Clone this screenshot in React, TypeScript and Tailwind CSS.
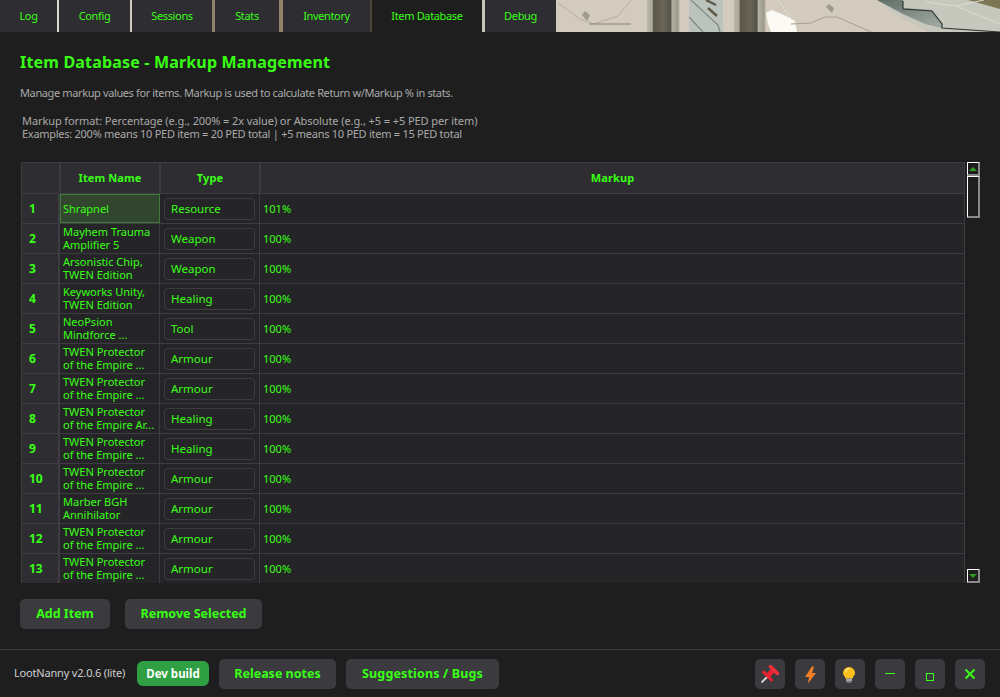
import { ReactNode } from "react";

const tabs = [
  { label: "Log", w: "w-[59px]", gap: "border-r-2 border-[#d8d6cc]" },
  { label: "Config", w: "w-[73px]", gap: "border-r-2 border-[#cfcabb]" },
  { label: "Sessions", w: "w-[83px]", gap: "border-r-[3px] border-[#8f8468]" },
  { label: "Stats", w: "w-[68px]", gap: "border-r-4 border-[#8f8468]" },
  { label: "Inventory", w: "w-[89px]", gap: "border-r-2 border-[#4a4536]" },
  { label: "Item Database", w: "w-[113px]", gap: "border-r-[3px] border-[#c8c6bc]", active: true },
  { label: "Debug", w: "w-[71px]", gap: "" },
];

const rows: [string, string, string][] = [
  ["Shrapnel", "Resource", "101%"],
  ["Mayhem Trauma\nAmplifier 5", "Weapon", "100%"],
  ["Arsonistic Chip,\nTWEN Edition", "Weapon", "100%"],
  ["Keyworks Unity,\nTWEN Edition", "Healing", "100%"],
  ["NeoPsion\nMindforce ...", "Tool", "100%"],
  ["TWEN Protector\nof the Empire ...", "Armour", "100%"],
  ["TWEN Protector\nof the Empire ...", "Armour", "100%"],
  ["TWEN Protector\nof the Empire Ar...", "Healing", "100%"],
  ["TWEN Protector\nof the Empire ...", "Healing", "100%"],
  ["TWEN Protector\nof the Empire ...", "Armour", "100%"],
  ["Marber BGH\nAnnihilator", "Armour", "100%"],
  ["TWEN Protector\nof the Empire ...", "Armour", "100%"],
  ["TWEN Protector\nof the Empire ...", "Armour", "100%"],
];

function HeaderPhoto() {
  return (
    <svg viewBox="0 0 444 32" preserveAspectRatio="none" className="h-8 flex-1 block">
      <defs>
        <linearGradient id="pipe" x1="0" x2="1" y1="0" y2="0">
          <stop offset="0" stopColor="#b9b7a6" />
          <stop offset="0.16" stopColor="#a8a695" />
          <stop offset="0.2" stopColor="#5c5749" />
          <stop offset="0.5" stopColor="#6a6558" />
          <stop offset="0.72" stopColor="#56524a" />
          <stop offset="0.76" stopColor="#b3b1a0" />
          <stop offset="0.94" stopColor="#9b9989" />
          <stop offset="1" stopColor="#d3ccbd" />
        </linearGradient>
        <linearGradient id="wedge" x1="0" x2="1" y1="0" y2="1">
          <stop offset="0" stopColor="#5f6e68" />
          <stop offset="1" stopColor="#a3aca4" />
        </linearGradient>
      </defs>
      <rect width="444" height="32" fill="#d3ccbe" />
      <path d="M2 3l22 16 14 5M75 0L62 16 38 24" stroke="#b7ae9c" strokeWidth="1" fill="none" />
      <path d="M26 15l5 6 3-6-5-4z" fill="#a09a8a" />
      <path d="M33 24h42" stroke="#8a8371" strokeWidth="1" />
      <rect x="91" width="33" height="32" fill="url(#pipe)" />
      <rect x="133" width="34" height="32" fill="#bcc2bc" />
      <path d="M135 0l27 25 2 7M133 17l14 15" stroke="#7f8781" strokeWidth="1.200" fill="none" />
      <path d="M150 0l10 5M152 8l9 8" stroke="#5f5a4c" strokeWidth="2.500" fill="none" />
      <rect x="178" width="32" height="32" fill="url(#pipe)" />
      <path d="M210 13l6-3 14 6 9 5 2 11h-26l-3-8z" fill="#fbfaf4" />
      <path d="M235 24l20-1 14-6 12 0 34 15" stroke="#a89f8b" strokeWidth="1" fill="none" />
      <path d="M222 0l14 20" stroke="#e8e4da" strokeWidth="1" strokeDasharray="2 2" fill="none" />
      <path d="M270 7l6 6 2-5-5-4z" fill="#a09a8a" />
      <path d="M321 0h123v32h-72l-10-6-17-8z" fill="#c6c7bd" />
      <path d="M321 0h26v8l29 2 10 14v4l-17-4-22-10z" fill="url(#wedge)" />
      <path d="M347 1v8l29 2 10 13v4l58 4" stroke="#2f3733" strokeWidth="1.200" fill="none" />
      <path d="M412 0h32v9z" fill="#7c7752" />
      <path d="M370 2l30 4 28-6M400 6l44 18" stroke="#dddbd0" strokeWidth="1" fill="none" />
    </svg>
  );
}

function PinIcon() {
  return (
    <svg width="18" height="18" viewBox="0 0 18 18">
      <path d="M0.500 17.500L6 12" stroke="#dcdcdc" strokeWidth="1.800" />
      <path d="M6 11.500L13 4.500" stroke="#e8232f" strokeWidth="5" />
      <path d="M2.500 7l8 8" stroke="#e8232f" strokeWidth="3" strokeLinecap="round" />
      <path d="M9.500 1.500l7 7" stroke="#f0303a" strokeWidth="3.500" strokeLinecap="round" />
    </svg>
  );
}

function BoltIcon() {
  return (
    <svg width="14" height="18" viewBox="0 0 14 18">
      <path d="M9 1.500L2 12h4l-1 6.500L13 8H9l2-6.500z" fill="#f47f24" />
    </svg>
  );
}

function BulbIcon() {
  return (
    <svg width="14" height="18" viewBox="0 0 14 18">
      <path d="M6 2a6 6 0 0 0-6 6c0 2.300 2 3.500 2.500 5.500h7C10 11.500 12 10.300 12 8a6 6 0 0 0-6-6z" fill="#fcc01e" />
      <path d="M3 7A3.200 3.200 0 0 1 6 3.700" stroke="#ffe27a" strokeWidth="1.500" fill="none" strokeLinecap="round" />
      <rect x="3" y="13.500" width="6" height="3" fill="#a8a8a8" />
      <rect x="4" y="16.500" width="4" height="1.500" fill="#7c7c7c" />
    </svg>
  );
}

function IconButton({ children }: { children: ReactNode }) {
  return (
    <div className="w-[30px] h-[30px] rounded-[5px] bg-[#3a3a3f] flex items-center justify-center">
      {children}
    </div>
  );
}

function TextButton({ children, className }: { children: ReactNode; className: string }) {
  return (
    <div className={`h-[30px] pt-px rounded-[5px] bg-[#3a3a3f] flex items-center justify-center text-[#39ff14] font-bold text-[12.500px] ${className}`}>
      {children}
    </div>
  );
}

function ScrollBar() {
  return (
    <div className="w-[13px] h-[421px] ml-[2px] flex flex-col justify-between">
      <div>
        <div className="w-[13px] h-[14px] bg-[#1e1e1e] border-l border-t border-white border-r-2 border-b-2 border-r-[#8a8a8a] border-b-[#8a8a8a] flex items-center justify-center">
          <div className="w-0 h-0 border-x-[4px] border-x-transparent border-b-[4px] border-b-[#2f9e22]" />
        </div>
        <div className="w-[13px] h-[42px] bg-[#1e1e1e] border-l border-t border-white border-r-2 border-b-2 border-r-[#8a8a8a] border-b-[#8a8a8a]" />
      </div>
      <div className="w-[13px] h-[14px] bg-[#1e1e1e] border-l border-t border-white border-r-2 border-b-2 border-r-[#8a8a8a] border-b-[#8a8a8a] flex items-center justify-center">
        <div className="w-0 h-0 border-x-[4px] border-x-transparent border-t-[4px] border-t-[#2f9e22]" />
      </div>
    </div>
  );
}

export default function App() {
  return (
    <div className="w-[1000px] h-[697px] bg-[#1e1e1e] flex flex-col overflow-hidden font-['Noto_Sans',sans-serif] text-[#39ff14]">
      <div className="h-8 flex">
        {tabs.map((t) => (
          <div
            key={t.label}
            className={`${t.w} ${t.gap} h-8 flex items-center justify-center text-[11px] tracking-[-0.35px] ${t.active ? "bg-[#1e1e1e]" : "bg-[#2d2d32]"}`}
          >
            {t.label}
          </div>
        ))}
        <HeaderPhoto />
      </div>

      <div className="flex-1 flex flex-col px-5 min-h-0">
        <h1 className="mt-[20px] h-5 leading-5 font-bold text-[16px] tracking-[0.18px]">Item Database - Markup Management</h1>
        <p className="mt-[13px] h-4 leading-4 text-[11px] tracking-[-0.38px] text-[#a9a9a9]">
          Manage markup values for items. Markup is used to calculate Return w/Markup % in stats.
        </p>
        <div className="mt-[13px] ml-[2px] text-[11px] leading-[13px] text-[#a9a9a9]">
          <p className="tracking-[-0.09px]">Markup format: Percentage (e.g., 200% = 2x value) or Absolute (e.g., +5 = +5 PED per item)</p>
          <p className="tracking-[-0.27px]">Examples: 200% means 10 PED item = 20 PED total | +5 means 10 PED item = 15 PED total</p>
        </div>

        <div className="mt-[22px] ml-px flex h-[421px]">
          <div className="w-[944px] h-[421px] overflow-hidden border-l border-t border-[#3c3c42]">
            <div className="flex h-[31px] bg-[#2d2d32] font-bold text-[11px] tracking-[0.1px] border-b border-[#3c3c42]">
              <div className="w-[39px] border-r-2 border-[#3c3c42]" />
              <div className="w-[100px] border-r-2 border-[#3c3c42] flex items-center justify-center">Item Name</div>
              <div className="w-[100px] border-r-2 border-[#3c3c42] flex items-center justify-center">Type</div>
              <div className="flex-1 border-r border-[#3c3c42] flex items-center justify-center">Markup</div>
            </div>
            {rows.map(([name, type, markup], i) => (
              <div key={i} className="flex h-[30px] border-b border-[#3c3c42] bg-[#252528]">
                <div className="w-[38px] shrink-0 bg-[#2d2d32] border-r-2 border-[#3c3c42] flex items-center pl-[7px] pt-px font-bold text-[12px]">
                  {i + 1}
                </div>
                <div className={`w-[100px] shrink-0 flex items-center border-r border-[#3c3c42] text-[11px] leading-[13px] whitespace-pre ${i === 0 ? "pl-[2px] bg-[#32452f] border border-[#3f7a38]" : "pl-[3px] pb-[2px]"}`}>
                  {name}
                </div>
                <div className="w-[100px] shrink-0 flex items-center pl-[4px] border-r border-[#3c3c42]">
                  <div className="w-[91px] h-[22px] rounded-[4px] border border-[#3c3c42] bg-[#252528] flex items-center pl-[6px] pt-px text-[11.500px]">
                    {type}
                  </div>
                </div>
                <div className="flex-1 flex items-center pl-[3px] pt-px border-r border-[#3c3c42] text-[11px]">{markup}</div>
              </div>
            ))}
          </div>
          <ScrollBar />
        </div>

        <div className="mt-[16px] flex gap-[15px]">
          <TextButton className="w-[90px]">Add Item</TextButton>
          <TextButton className="w-[137px]">Remove Selected</TextButton>
        </div>
      </div>

      <div className="h-[48px] border-t border-[#3c3c3c] flex items-center pl-[14px] pr-[15px]">
        <span className="text-[11px] tracking-[-0.18px] whitespace-nowrap text-[#cfcfcf] w-[113px]">LootNanny v2.0.6 (lite)</span>
        <div className="ml-[10px] w-[72px] h-[25px] pt-px rounded-[6px] bg-[#2ea043] flex items-center justify-center text-white font-bold text-[11.500px]">Dev build</div>
        <TextButton className="ml-[10px] w-[117px]">Release notes</TextButton>
        <TextButton className="ml-[10px] w-[153px] tracking-[0.15px]">Suggestions / Bugs</TextButton>
        <div className="ml-auto flex gap-[10px]">
          <IconButton><PinIcon /></IconButton>
          <IconButton><BoltIcon /></IconButton>
          <IconButton><BulbIcon /></IconButton>
          <IconButton><div className="w-[10px] h-px bg-[#39ff14]" /></IconButton>
          <IconButton><div className="w-2 h-2 mt-[6px] border border-[#39ff14]" /></IconButton>
          <IconButton>
            <svg width="12" height="12" viewBox="0 0 12 12"><path d="M1.500 1.500l9 9M10.500 1.500l-9 9" stroke="#39ff14" strokeWidth="2" /></svg>
          </IconButton>
        </div>
      </div>
    </div>
  );
}
